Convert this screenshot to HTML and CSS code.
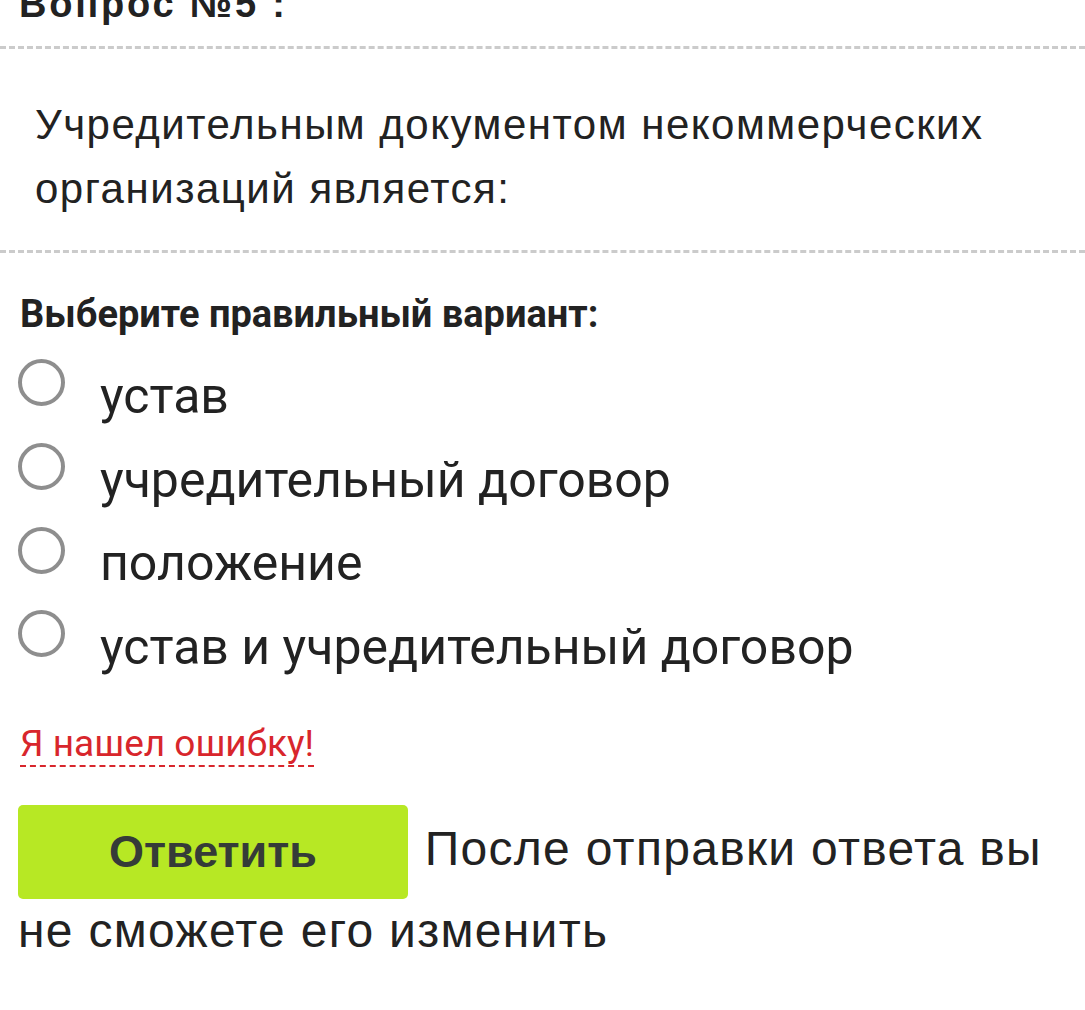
FILE: index.html
```html
<!DOCTYPE html>
<html lang="ru">
<head>
    <meta charset="UTF-8">
    <meta name="viewport" content="width=device-width, initial-scale=1.0">
    <title>Вопрос №5</title>
    <link rel="stylesheet" href="styles.css">
</head>
<body>
    <div class="test-page">
        <h2 class="question-title">Вопрос №5 :</h2>
        <hr class="divider">

        <div class="question-text">
            Учредительным документом некоммерческих организаций является:
        </div>
        <hr class="divider divider-bottom">

        <form id="answerForm">
            <div class="choose-label">Выберите правильный вариант:</div>

            <label class="option">
                <input type="radio" name="answer" value="1">
                <span class="radio-mark"></span>
                <span class="option-text">устав</span>
            </label>
            <label class="option">
                <input type="radio" name="answer" value="2">
                <span class="radio-mark"></span>
                <span class="option-text">учредительный договор</span>
            </label>
            <label class="option">
                <input type="radio" name="answer" value="3">
                <span class="radio-mark"></span>
                <span class="option-text">положение</span>
            </label>
            <label class="option">
                <input type="radio" name="answer" value="4">
                <span class="radio-mark"></span>
                <span class="option-text">устав и учредительный договор</span>
            </label>

            <div class="report">
                <a href="#" class="report-link">Я нашел ошибку!</a>
            </div>

            <div class="submit-row">
                <button type="submit" class="submit-btn">Ответить</button>
                После отправки ответа вы не сможете его изменить
            </div>
        </form>
    </div>
</body>
</html>
```

FILE: styles.css
```css
* {
    box-sizing: border-box;
    margin: 0;
    padding: 0;
}

body {
    font-family: "Liberation Sans", Arial, sans-serif;
    background-color: #fff;
    color: #222;
}

.test-page {
    padding: 0 18px 40px;
}

.question-title {
    font-size: 38px;
    font-weight: bold;
    line-height: 46px;
    letter-spacing: 2.8px;
    color: #222;
    margin-top: -19px;
    padding-left: 1px;
}

.divider {
    border: none;
    border-top: 3px dashed #cbcbcb;
    margin: 19px -18px 0;
}

.divider-bottom {
    margin-top: 29px;
}

.question-text {
    font-size: 42px;
    line-height: 64px;
    letter-spacing: 1.5px;
    padding: 44px 0 0 17px;
}

.choose-label {
    font-family: Roboto, "Noto Sans", sans-serif;
    font-size: 38px;
    font-weight: bold;
    line-height: 46px;
    margin: 38px 0 17px 2px;
}

.option {
    display: flex;
    align-items: center;
    gap: 35px;
    height: 83.7px;
    cursor: pointer;
}

.option input {
    display: none;
}

.radio-mark {
    width: 47px;
    height: 47px;
    margin-bottom: 26px;
    border: 4px solid #8e8e8e;
    border-radius: 50%;
    flex-shrink: 0;
}

.option-text {
    font-family: Roboto, "Noto Sans", sans-serif;
    font-size: 50px;
    line-height: 60px;
}

.report {
    margin: 33px 0 0 2px;
    font-family: Roboto, "Noto Sans", sans-serif;
    font-size: 37px;
    line-height: 44px;
}

.report-link {
    color: #d8262c;
    text-decoration: none;
    border-bottom: 2px dashed #d8262c;
}

.submit-row {
    margin-top: 39px;
    font-size: 48px;
    line-height: 64px;
    letter-spacing: 1.3px;
}

.submit-btn {
    display: inline-block;
    vertical-align: middle;
    width: 390px;
    height: 94px;
    margin-right: 2px;
    background-color: #b7e824;
    color: #353b38;
    font-family: "Liberation Sans", Arial, sans-serif;
    font-size: 45px;
    font-weight: bold;
    letter-spacing: 0;
    border: none;
    border-radius: 5px;
    cursor: pointer;
}
```
